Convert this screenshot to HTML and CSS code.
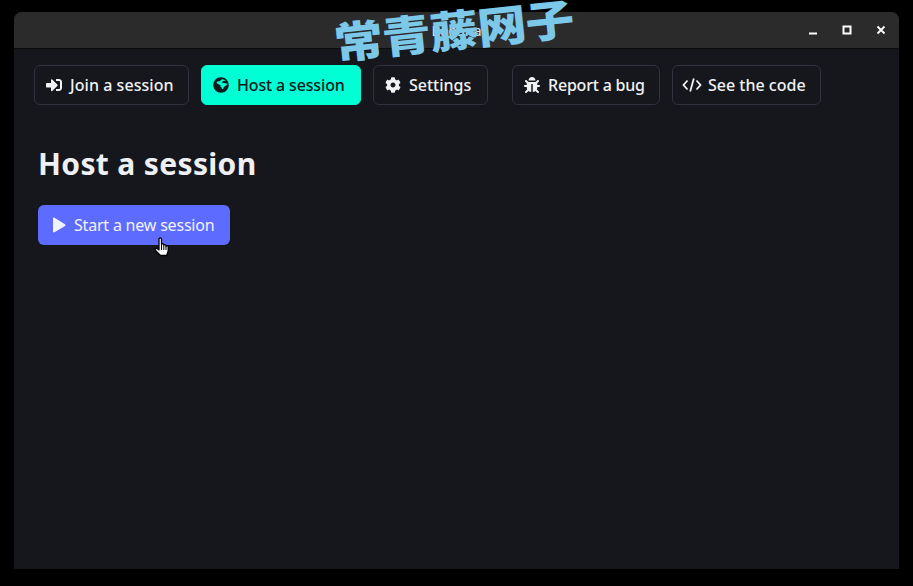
FILE: index.html
```html
<!DOCTYPE html>
<html lang="en">
<head>
<meta charset="utf-8">
<title>Banana</title>
<link rel="stylesheet" href="styles.css">
</head>
<body>
<div class="window">
  <header class="titlebar">
    <span class="title">Banana</span>
    <div class="controls">
      <svg class="ctl" viewBox="0 0 10 10"><rect x="1" y="7.500" width="8" height="2" fill="#fff"/></svg>
      <svg class="ctl" viewBox="0 0 10 10"><rect x="1.500" y="1.500" width="7" height="7" fill="none" stroke="#fff" stroke-width="2"/></svg>
      <svg class="ctl" viewBox="0 0 10 10"><path d="M1.500 1.500l7 7M8.500 1.500l-7 7" stroke="#fff" stroke-width="1.800" fill="none"/></svg>
    </div>
  </header>
  <main class="content">
    <nav class="nav">
      <a class="btn b-join">
        <svg class="ico" viewBox="0 0 512 512"><path fill="currentColor" d="M416 448h-84c-6.600 0-12-5.400-12-12v-40c0-6.600 5.400-12 12-12h84c17.700 0 32-14.300 32-32V160c0-17.700-14.300-32-32-32h-84c-6.600 0-12-5.400-12-12V76c0-6.600 5.400-12 12-12h84c53 0 96 43 96 96v192c0 53-43 96-96 96zm-47-201L201 79c-15-15-41-4.500-41 17v96H24c-13.300 0-24 10.700-24 24v96c0 13.300 10.700 24 24 24h136v96c0 21.500 26 32 41 17l168-168c9.300-9.400 9.300-24.600 0-34z"/></svg>
        Join a session
      </a>
      <a class="btn active b-host">
        <svg class="ico" viewBox="0 0 512 512"><path fill="currentColor" fill-rule="evenodd" d="M256 8C119 8 8 119 8 256s111 248 248 248 248-111 248-248S393 8 256 8zM230 100l70-30 60 14 40 40-80 6-30 30 20 34 120 4 20 40-50 50-50 20-16 56-40 30-20-60-40-30 10-40-70-30-60-40 20-50 70-10 50-20z"/></svg>
        Host a session
      </a>
      <a class="btn b-set">
        <svg class="ico" viewBox="0 0 512 512"><path fill="currentColor" d="M487.400 315.700l-42.600-24.600c4.300-23.200 4.300-47 0-70.200l42.600-24.600c4.900-2.800 7.100-8.600 5.500-14-11.100-35.600-30-67.800-54.700-94.600-3.800-4.100-10-5.100-14.800-2.300L380.800 110c-17.900-15.400-38.500-27.300-60.800-35.100V25.800c0-5.600-3.900-10.500-9.400-11.700-36.700-8.200-74.300-7.800-109.200 0-5.500 1.200-9.400 6.100-9.400 11.700V75c-22.200 7.900-42.800 19.800-60.800 35.100L88.700 85.500c-4.900-2.800-11-1.900-14.800 2.300-24.700 26.700-43.600 58.900-54.700 94.600-1.700 5.400.6 11.200 5.500 14L67.300 221c-4.300 23.200-4.300 47 0 70.200l-42.600 24.600c-4.900 2.800-7.100 8.600-5.500 14 11.100 35.600 30 67.800 54.700 94.600 3.800 4.100 10 5.100 14.800 2.300l42.600-24.600c17.900 15.400 38.500 27.300 60.800 35.100v49.200c0 5.600 3.900 10.500 9.400 11.700 36.700 8.200 74.300 7.800 109.200 0 5.500-1.200 9.400-6.100 9.400-11.700v-49.200c22.200-7.900 42.800-19.800 60.800-35.100l42.600 24.600c4.900 2.800 11 1.900 14.800-2.300 24.700-26.700 43.600-58.900 54.700-94.600 1.500-5.500-.7-11.300-5.600-14.100zM256 336c-44.100 0-80-35.900-80-80s35.900-80 80-80 80 35.900 80 80-35.900 80-80 80z"/></svg>
        Settings
      </a>
      <a class="btn b-bug">
        <svg class="ico" viewBox="0 0 512 512"><path fill="currentColor" d="M511.988 288.900c-.478 17.430-15.217 31.100-32.653 31.100H424v16c0 21.864-4.882 42.584-13.600 61.145l60.228 60.228c12.496 12.497 12.496 32.758 0 45.255-12.498 12.497-32.759 12.496-45.256 0l-54.736-54.736C345.886 467.965 314.351 480 280 480V236c0-6.627-5.373-12-12-12h-24c-6.627 0-12 5.373-12 12v244c-34.351 0-65.886-12.035-90.636-32.108l-54.736 54.736c-12.498 12.497-32.759 12.496-45.256 0-12.496-12.497-12.496-32.758 0-45.255l60.228-60.228C92.882 378.584 88 357.864 88 336v-16H32.666C15.230 320 .491 306.330.013 288.900-.484 270.816 14.028 256 32 256h56v-58.745l-46.628-46.628c-12.496-12.497-12.496-32.758 0-45.255 12.498-12.497 32.758-12.497 45.256 0L141.255 160h229.489l54.627-54.627c12.498-12.497 32.758-12.497 45.256 0 12.496 12.497 12.496 32.758 0 45.255L424 197.255V256h56c17.972 0 32.484 14.816 31.988 32.900zM257 0c-61.856 0-112 50.144-112 112h224C369 50.144 318.856 0 257 0z"/></svg>
        Report a bug
      </a>
      <a class="btn b-code">
        <svg class="ico ico-code" viewBox="0 0 20 16"><path d="M5.500 3.500L1.500 8l4 4.500M14.500 3.500l4 4.500-4 4.500M11.800 1.500L8.200 14.500" fill="none" stroke="currentColor" stroke-width="1.800"/></svg>
        See the code
      </a>
    </nav>
    <section class="panel">
      <h1 class="heading">Host a session</h1>
      <a class="primary">
        <svg class="play" viewBox="0 0 14 16"><path fill="currentColor" d="M1 1.500C1 .7 1.800.3 2.500.7l10.500 6.500c.6.400.6 1.300 0 1.700L2.500 15.300c-.7.400-1.500 0-1.500-.8z"/></svg>
        Start a new session
      </a>
    </section>
  </main>
</div>
<div class="watermark">常青藤网子</div>
<svg class="cursor" viewBox="0 0 18 20"><path d="M5 2c0-1.500 2.500-1.500 2.500 0v5.500c0-1.200 2.300-1.200 2.300 0v1c0-1.200 2.200-1.200 2.200 0v1c0-1.100 2.200-1.100 2.200 0V13c0 2.500-1 3.500-1.500 5.500H6.500L1.500 13.500c-1-1.200.5-2.700 1.800-1.700L5 13z" fill="#fff" stroke="#000" stroke-width="1.300" stroke-linejoin="round"/><path d="M7.500 8v5M9.800 9v4M12 9.500V13" stroke="#000" stroke-width="1"/></svg>
</body>
</html>
```

FILE: styles.css
```css
* { box-sizing: border-box; }

html, body {
  margin: 0;
  height: 100%;
  overflow: hidden;
}

body {
  position: relative;
  background: #000;
  padding: 12px 14px 17px;
  font-family: "Noto Sans", "Open Sans", sans-serif;
  color: #f1f2f4;
}

.window {
  height: 100%;
  display: flex;
  flex-direction: column;
  background: #15171c;
  border-radius: 8px 8px 0 0;
  overflow: hidden;
}

.titlebar {
  position: relative;
  flex: 0 0 37px;
  background: #2b2b2b;
  border-bottom: 1px solid #0d0d0d;
  display: flex;
  align-items: center;
  justify-content: flex-end;
}

.title {
  position: absolute;
  left: 0;
  right: 0;
  text-align: center;
  font-size: 14px;
  color: #e6e6e6;
}

.controls {
  display: flex;
  gap: 24px;
  padding: 0 13px 1px 0;
}

.ctl {
  width: 10px;
  height: 10px;
}

.content {
  flex: 1;
  padding: 16px 20px;
}

.nav {
  display: flex;
}

.btn {
  height: 40px;
  display: flex;
  align-items: center;
  gap: 8px;
  padding: 0 11px;
  border: 1px solid #30323d;
  border-radius: 6px;
  font-size: 16px;
  font-weight: 500;
  white-space: nowrap;
  color: #f1f2f4;
}

.b-join { width: 155px; margin-right: 12px; letter-spacing: 0.05px; }
.b-host { width: 160px; margin-right: 12px; letter-spacing: -0.15px; }
.b-set { width: 115px; margin-right: 24px; }
.b-bug { width: 148px; margin-right: 12px; letter-spacing: -0.2px; }
.b-code { width: 149px; padding: 0 9px; gap: 6px; }

.active {
  background: #00ffd5;
  border-color: #00ffd5;
  color: #0c1a1c;
}

.ico {
  width: 16px;
  height: 16px;
  flex: none;
}

.ico-code {
  width: 20px;
}

.panel {
  padding: 40px 4px 0;
}

.heading {
  margin: 0 0 22px;
  font-size: 30px;
  line-height: 38px;
  font-weight: 700;
  letter-spacing: 0.35px;
  color: #eef0f3;
}

.primary {
  display: inline-flex;
  align-items: center;
  gap: 8px;
  height: 40px;
  width: 192px;
  padding: 0 14px;
  background: #5d6cff;
  border-radius: 6px;
  font-size: 16px;
  color: #f0f2ff;
  white-space: nowrap;
  letter-spacing: -0.2px;
}

.play {
  width: 14px;
  height: 16px;
  flex: none;
}

.watermark {
  position: absolute;
  left: 334px;
  top: 11px;
  font-family: "Noto Sans CJK SC", sans-serif;
  font-weight: 900;
  font-size: 49px;
  line-height: 60px;
  letter-spacing: -1px;
  color: #7cc8e8;
  white-space: nowrap;
  transform: rotate(-6deg) scaleY(0.88);
  transform-origin: left center;
}

.cursor {
  position: absolute;
  left: 154px;
  top: 237px;
  width: 18px;
  height: 20px;
}
```
